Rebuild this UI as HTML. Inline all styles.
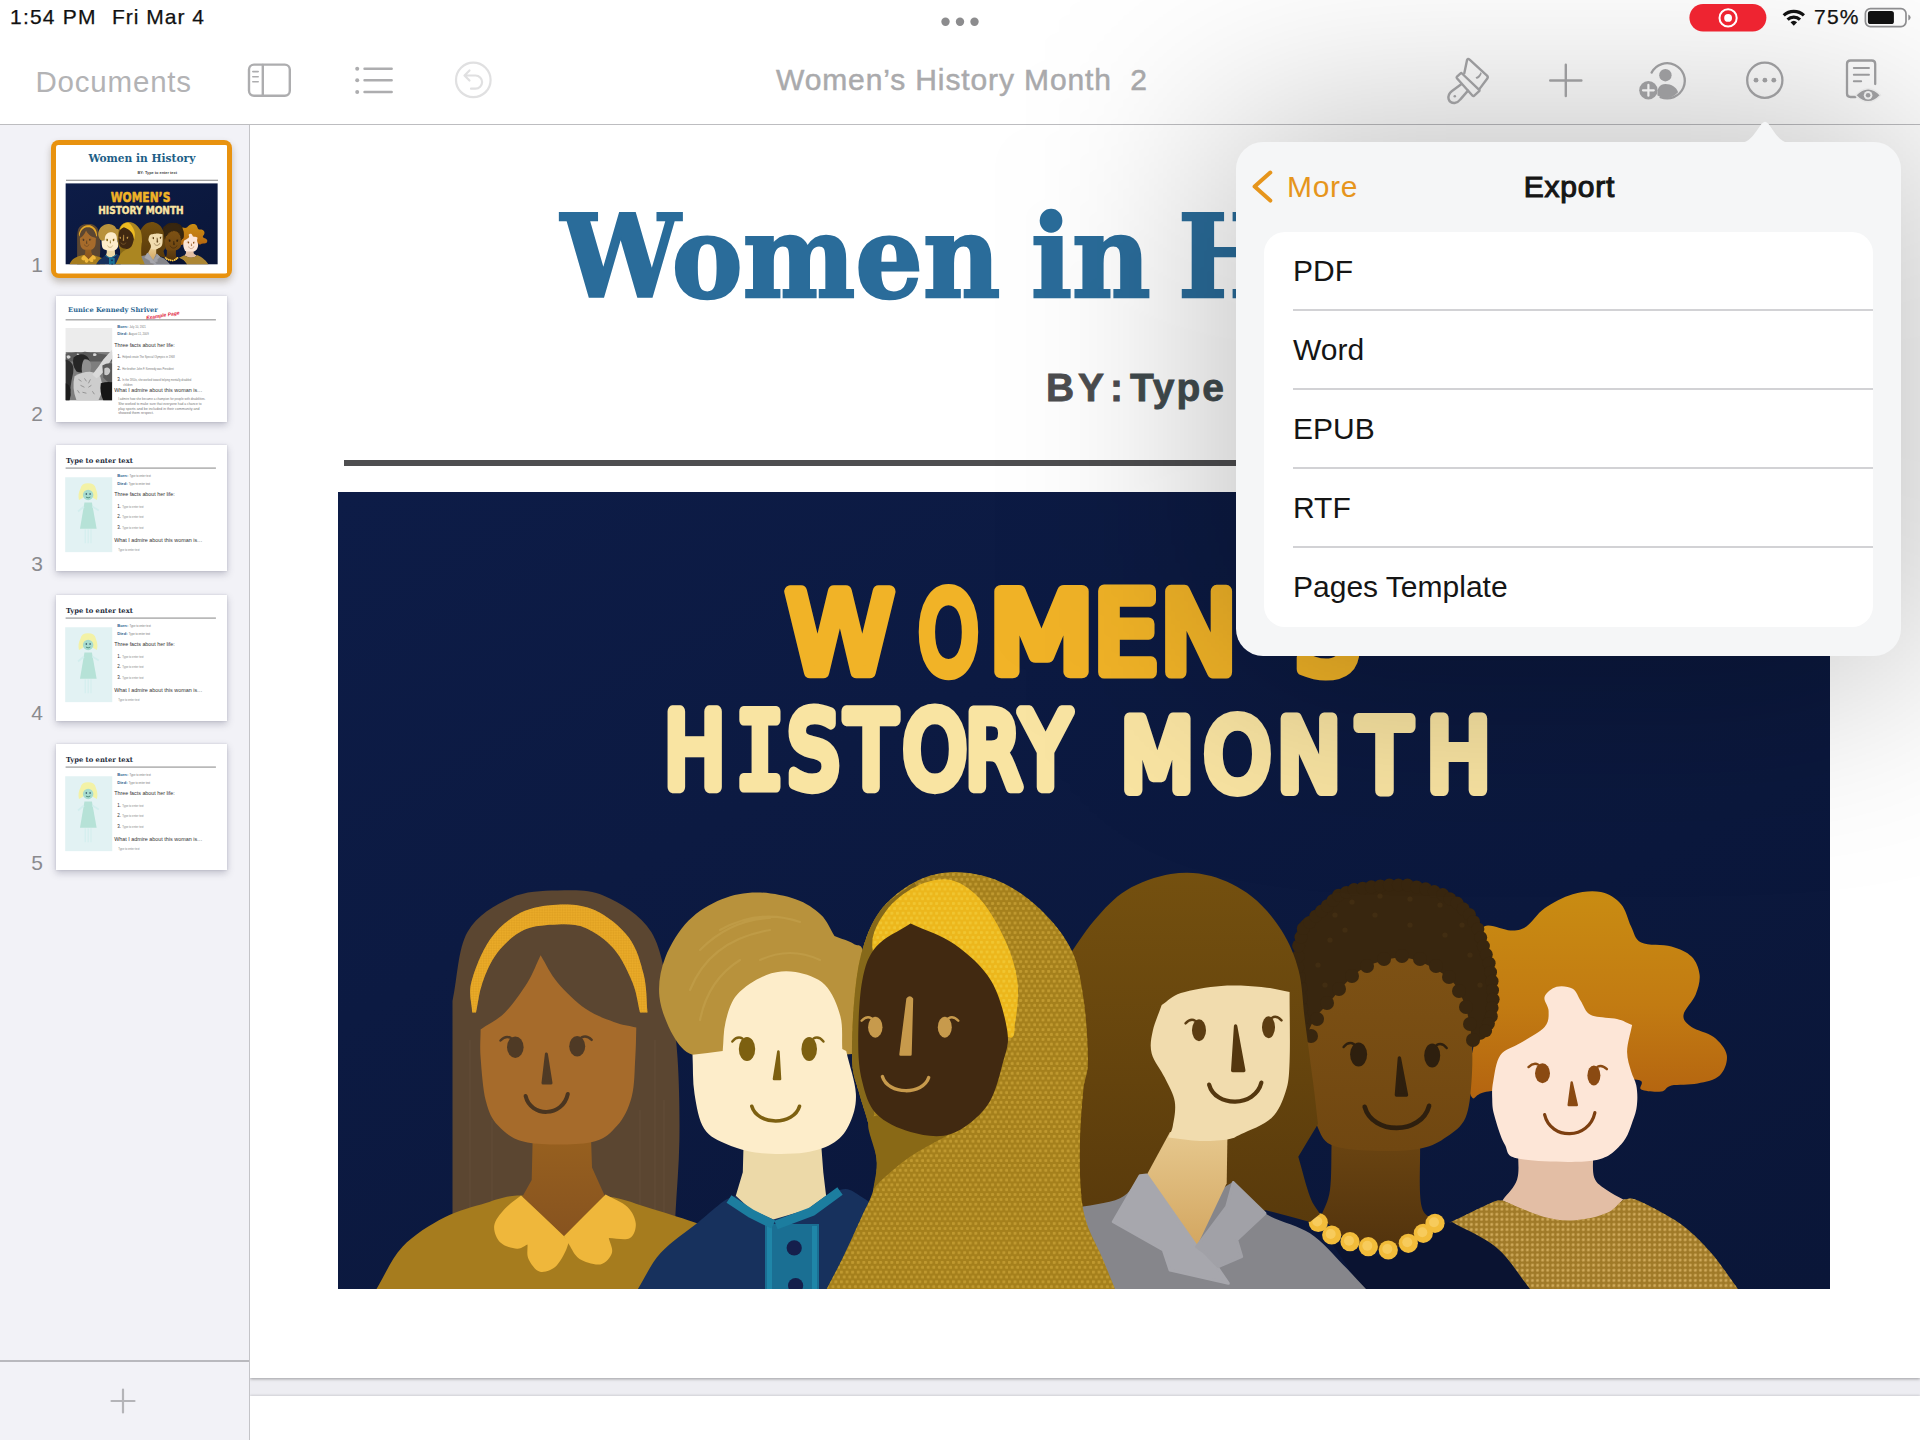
<!DOCTYPE html>
<html lang="en">
<head>
<meta charset="utf-8">
<title>Women's History Month 2</title>
<style>
*{box-sizing:border-box;margin:0;padding:0}
html,body{width:1920px;height:1440px;overflow:hidden;background:#fff;font-family:"Liberation Sans",sans-serif;}
#app{position:relative;width:1920px;height:1440px;overflow:hidden;background:#fff}
.abs{position:absolute}
/* status bar */
#status{-webkit-text-stroke:.25px #111;position:absolute;left:0;top:0;width:1920px;height:40px;color:#111;font-size:21px;letter-spacing:1px;z-index:30}
#status span{position:absolute;white-space:nowrap;line-height:24px}
/* toolbar */
#toolbar{position:absolute;left:0;top:0;width:1920px;height:125px;border-bottom:1.5px solid #bdbdc0;z-index:20;background:#fff}
#toolbar .t{position:absolute;white-space:nowrap;color:#b3b3b5;font-size:29.5px;line-height:34px;letter-spacing:.8px}
/* sidebar */
#sidebar{position:absolute;left:0;top:125px;width:250px;height:1315px;background:#f2f2f7;border-right:1.5px solid #c4c4c8;z-index:5}
.num{position:absolute;color:#8a8a8e;font-size:21px;line-height:22px;width:20px;text-align:center;left:27px}
.thumb{position:absolute;left:56px;width:171px;height:126px;background:#fff;box-shadow:0 3px 7px rgba(60,60,90,.28),0 0 2px rgba(60,60,90,.18);overflow:hidden}
/* page */
#page{position:absolute;left:250px;top:125px;width:1670px;height:1253px;background:#fff;box-shadow:0 1px 3px rgba(0,0,0,.35);z-index:2}
#gap{position:absolute;left:250px;top:1378px;width:1670px;height:18px;background:#ededf2;z-index:1}
#page2{position:absolute;left:250px;top:1396px;width:1670px;height:60px;background:#fff;box-shadow:0 -1px 2px rgba(0,0,0,.12);z-index:2}
.tw{position:absolute;top:186.5px;font-family:"DejaVu Serif","Liberation Serif",serif;font-weight:bold;font-size:115px;line-height:140px;color:#2a6c9a;white-space:nowrap;transform-origin:0 0;z-index:3;-webkit-text-stroke:2.6px #2a6c9a;paint-order:stroke fill}
.by{z-index:3;top:363px;font-weight:bold;font-size:39px;line-height:50px;color:#4c4d4f;white-space:nowrap;-webkit-text-stroke:.8px #4c4d4f}
/* popover */
#shade{position:absolute;z-index:25;left:1221px;top:127px;width:695px;height:544px;border-radius:40px;background:rgba(0,0,0,.265);filter:blur(105px)}
#pop{position:absolute;z-index:40;left:1236px;top:142px;width:665px;height:514px;border-radius:27px;background:#f5f6f7}
#pop .list{position:absolute;left:28px;top:90px;width:609px;height:395px;background:#fff;border-radius:21px}
#pop .row{position:absolute;left:29px;width:580px;height:79px;font-size:30px;line-height:78px;color:#151515;white-space:nowrap}
#pop .sep{position:absolute;left:29px;width:580px;height:2px;background:#d2d2d5}
</style>
</head>
<body>
<div id="app">

<!-- ===== toolbar ===== -->
<div id="toolbar">
  <div class="t" style="left:35.5px;top:64.5px">Documents</div>
  <div class="t" id="doctitle" style="left:776px;top:63px;font-size:30px;color:#aaaaac;-webkit-text-stroke:.5px #aaaaac;letter-spacing:.88px;word-spacing:0px">Women’s History Month&nbsp; 2</div>
</div>

<!-- ===== status ===== -->
<div id="status">
  <span style="left:10px;top:5px;letter-spacing:1.2px">1:54 PM</span>
  <span style="left:112px;top:5px">Fri Mar 4</span>
  <span style="left:1814px;top:5px;letter-spacing:1.2px">75%</span>
</div>


<!-- ===== toolbar + status icons ===== -->
<svg class="abs" style="left:0;top:0;z-index:31" width="1920" height="125" viewBox="0 0 1920 125" fill="none" stroke-linecap="round" stroke-linejoin="round">
  <!-- multitask dots -->
  <g fill="#8c8c8e"><circle cx="945.5" cy="21.8" r="4.2"/><circle cx="960" cy="21.8" r="4.2"/><circle cx="974.5" cy="21.8" r="4.2"/></g>
  <!-- sidebar toggle -->
  <g stroke="#adadaf" stroke-width="2.4">
    <rect x="249" y="64.6" width="40.8" height="31.2" rx="5"/>
    <path d="M262.8 65v30.5"/>
    <path d="M252.8 71.6h5.4M252.8 76.7h5.4M252.8 81.8h5.4" stroke-width="1.6"/>
  </g>
  <!-- list -->
  <g stroke="#adadaf" stroke-width="2.4"><path d="M364.5 68.7h27.2M364.5 80.3h27.2M364.5 92h27.2"/></g>
  <g fill="#adadaf"><circle cx="357.2" cy="68.7" r="2"/><circle cx="357.2" cy="80.3" r="2"/><circle cx="357.2" cy="92" r="2"/></g>
  <!-- undo -->
  <g stroke="#e0e0e1" stroke-width="2.2"><circle cx="473.3" cy="79.9" r="17.3"/><path d="M469.5 70.5l-5 5 5 5M465 75.5h10.5a6.6 6.6 0 0 1 0 13.2h-4.5"/></g>
  <!-- brush -->
  <g stroke="#9a9a9c" stroke-width="2.4">
    <path d="M1464.3 73.2L1467 60.2Q1467.7 58 1469.6 59.6L1487 75.6Q1488.4 77 1487.3 78.5L1479 89.6"/>
    <path d="M1457 76.6L1460.6 73.4Q1461.3 72.8 1462 73.5L1479.2 89.8Q1479.9 90.5 1479.2 91.2L1474 95.8Q1473.3 96.4 1472.6 95.7L1456.9 78.2Q1456.3 77.4 1457 76.6Z"/>
    <path d="M1461.2 84.3L1452 91Q1447.6 94.4 1448.6 99Q1450 103.2 1454.6 103Q1458 102.6 1460.4 99.4L1468 90.6"/>
  </g>
  <path d="M1475.5 77.3q3.8-1.2 5.2-5.2l1 1.4q-1.2 4-5 5.6z" fill="#9a9a9c"/>
  <circle cx="1454.8" cy="96.2" r="1.3" fill="#9a9a9c"/>
  <!-- plus -->
  <path d="M1550.2 80.5h31.2M1565.8 64.8v31.2" stroke="#9a9a9c" stroke-width="2.4"/>
  <!-- collaborate -->
  <g>
    <path d="M1651.6 72.6A17.6 17.6 0 1 1 1660.6 97.1" stroke="#9a9a9c" stroke-width="2.3"/>
    <circle cx="1665.4" cy="75.2" r="6.2" fill="#9a9a9c"/>
    <path d="M1657.5 95.6c-.8-7.5 2.2-11.6 8-11.6s11 3.2 12.6 8.2q-6.500 6.800-14.6 5.800z" fill="#9a9a9c"/>
    <circle cx="1648.4" cy="90.3" r="9.2" fill="#9a9a9c"/>
    <path d="M1643 90.3h10.800M1648.4 84.9v10.800" stroke="#ececec" stroke-width="2.2"/>
  </g>
  <!-- more -->
  <circle cx="1764.8" cy="80.2" r="17.6" stroke="#9a9a9c" stroke-width="2.3"/>
  <g fill="#9a9a9c"><circle cx="1756" cy="80.2" r="2.4"/><circle cx="1764.9" cy="80.2" r="2.4"/><circle cx="1773.800" cy="80.2" r="2.4"/></g>
  <!-- document view -->
  <g stroke="#9a9a9c" stroke-width="2.3">
    <path d="M1855.500 97H1850.500Q1847 97 1847 93.500V64Q1847 60.500 1850.500 60.500H1871.700Q1875.200 60.500 1875.200 64V84"/>
    <path d="M1853.800 68h15.200M1853.800 74.700h15.200M1853.800 81.300h7.400" stroke-width="1.900"/>
  </g>
  <path d="M1855.600 95.300q12.500-13.200 25 0q-12.500 13.200-25 0z" fill="#9a9a9c" stroke="#e6e6e6" stroke-width="1.600"/>
  <circle cx="1868.100" cy="95.300" r="4.300" fill="#e8e8e8"/><circle cx="1868.100" cy="95.300" r="2.300" fill="#9a9a9c"/>
  <!-- recording pill -->
  <rect x="1689.400" y="4" width="77" height="27.400" rx="13.700" fill="#ee2431"/>
  <circle cx="1728.100" cy="17.900" r="8.600" stroke="#fff" stroke-width="2"/>
  <circle cx="1728.100" cy="17.900" r="3.900" fill="#fff"/>
  <!-- wifi -->
  <g stroke="#111" stroke-width="3.200" stroke-linecap="butt">
    <path d="M1783.700 15.300a14.800 14.800 0 0 1 20.200 0"/>
    <path d="M1787.600 19.600a9 9 0 0 1 12.400 0"/>
  </g>
  <path d="M1790.500 22.300a4.800 4.800 0 0 1 6.600 0l-3.300 3.500z" fill="#111"/>
  <!-- battery -->
  <rect x="1865.400" y="8.600" width="40.600" height="18" rx="5" stroke="#8d8d8f" stroke-width="1.700"/>
  <rect x="1867.900" y="11.100" width="26" height="13" rx="2.600" fill="#111"/>
  <path d="M1908.300 14.600q2.300 1 2.300 3t-2.300 3z" fill="#8d8d8f"/>
</svg>

<!-- ===== sidebar ===== -->
<div id="sidebar">
  <div class="abs" style="left:50.700px;top:15.400px;width:181.600px;height:138px;border-radius:8px;background:#e8920f;box-shadow:0 4px 7px rgba(80,60,30,.3)"></div>
  <svg class="abs" style="left:55.600px;top:20.200px" width="171.800" height="128.400" viewBox="0 0 171.800 128.400">
    <rect width="171.800" height="128.400" rx="2.500" fill="#fff"/>
    <text x="85.900" y="17.500" text-anchor="middle" font-family="'DejaVu Serif','Liberation Serif',serif" font-weight="bold" font-size="11" fill="#1e5f87" textLength="107" lengthAdjust="spacingAndGlyphs">Women in History</text>
    <text x="81.500" y="29.200" font-family="'Liberation Sans',sans-serif" font-weight="bold" font-size="3.900" fill="#444">BY: Type to enter text</text>
    <rect x="10" y="34.800" width="152" height=".8" fill="#666"/>
    <svg x="9.400" y="38.200" width="152.400" height="81.400" viewBox="338 492 1492 797" preserveAspectRatio="none"><use href="#art"/></svg>
    <g font-family="'DejaVu Sans','Liberation Sans',sans-serif" font-weight="bold" stroke-linejoin="round">
      <text x="54.800" y="57.300" font-size="13.500" fill="#f1b327" stroke="#f1b327" stroke-width=".6" textLength="59.600" lengthAdjust="spacingAndGlyphs">WOMEN’S</text>
      <text x="42.200" y="69" font-size="11.300" fill="#f9e4a2" stroke="#f9e4a2" stroke-width=".5" textLength="85.500" lengthAdjust="spacingAndGlyphs">HISTORY MONTH</text>
    </g>
  </svg>
  <svg class="thumb" style="top:170.500px" width="171" height="127" viewBox="0 0 171 127">
    <rect width="171" height="127" fill="#fff"/>
    <text x="11.500" y="16" font-family="'DejaVu Serif','Liberation Serif',serif" font-weight="bold" font-size="6.600" fill="#2c6792" textLength="90.500" lengthAdjust="spacingAndGlyphs">Eunice Kennedy Shriver</text>
    <text transform="translate(90.500 23.800) rotate(-9)" font-family="'Liberation Sans',sans-serif" font-style="italic" font-weight="bold" font-size="5" fill="#e0213a">Example Page</text>
    <rect x="9" y="23.600" width="151.500" height=".9" fill="#777"/>
    <rect x="8.900" y="32.300" width="47.100" height="73" fill="#ececec"/>
    <clipPath id="cph"><rect x="8.900" y="32.300" width="47.100" height="73"/></clipPath>
    <g clip-path="url(#cph)">
      <rect x="8.900" y="56.500" width="47.100" height="48.800" fill="#7e7e7e"/>
      <path d="M8.900 58.500C12 56.500 15 58 18 57C21 56 24 58 27 56.500C30 55.500 33 57.500 36 57C39 56.500 42 58 45 58.500L56 60V66H8.900Z" fill="#5a5a5a"/>
      <path d="M10 60.500q2-1.500 3.500 0t-1 2.500-2.500-2.500zM37 58q2-1 3 .5t-1.500 2-1.500-2.500zM20 58.500q1.500-1 2.500 0t-1 1.800z" fill="#d6d6d6"/>
      <path d="M8.900 64q5 1 7 5t0 12-3 24h-4z" fill="#2d2d2d"/>
      <path d="M17 62q5-4.500 10-3t6 6q-2 5-1 9-6 5-12 2-5-6-3-14z" fill="#262626"/>
      <path d="M27.500 64q4-1 6 2t1 8-4 6-5-3q-1-8 2-13z" fill="#8f8f8f"/>
      <path d="M18 81q8-5 17-4.500 6 1 9 5l2.500 10q-1 8-4.500 13.800h-22q-5-12-2-24.300z" fill="#cdcdcd"/>
      <path d="M22 84l3 2M28 83l2 3M34 84l-2 4M24 90l4 2M32 92l3-2M26 97l4 1M36 96l2 3M21 95l2 3" stroke="#8d8d8d" stroke-width=".9" fill="none"/>
      <path d="M36 79q6-7 11-15l9-10v9l-8 12q-4 6-8 8z" fill="#d9d9d9"/>
      <path d="M46 70q5-3 10-2v20q-6-1-9-6z" fill="#5b5b5b"/>
      <path d="M48 73q3-2 5 0t0 5-5 1z" fill="#c9c9c9"/>
      <path d="M44.500 88q6-2 11.500-1v18.300h-9q-4-8-2.500-17.300z" fill="#161616"/>
      <path d="M8.900 88q4 1 5 6t-1 11.300h-4z" fill="#1c1c1c"/>
    </g>
    <g font-family="'Liberation Sans',sans-serif" fill="#333">
      <text x="61" y="32" font-size="4.200" font-weight="bold" fill="#2f5f8f">Born: <tspan font-weight="normal" font-size="2.800" fill="#777">July 10, 1921</tspan></text>
      <text x="61" y="39.700" font-size="4.200" font-weight="bold" fill="#2f5f8f">Died: <tspan font-weight="normal" font-size="2.800" fill="#777">August 11, 2009</tspan></text>
      <text x="58" y="51" font-size="5.100" textLength="61" lengthAdjust="spacingAndGlyphs">Three facts about her life:</text>
      <text x="61" y="62.300" font-size="4.600">1. <tspan font-size="2.700" fill="#777">Helped create The Special Olympics in 1968</tspan></text>
      <text x="61" y="74.300" font-size="4.600">2. <tspan font-size="2.700" fill="#777">Her brother John F. Kennedy was President</tspan></text>
      <text x="61" y="86" font-size="4.600">3. <tspan font-size="2.700" fill="#777">In the 1950s, she worked toward helping mentally disabled</tspan></text>
      <text x="67" y="90.500" font-size="2.700" fill="#777">children</text>
      <text x="58" y="96.500" font-size="5.100" textLength="89" lengthAdjust="spacingAndGlyphs">What I admire about this woman is…</text>
      <g font-size="2.700" fill="#777">
        <text x="62" y="105" textLength="88" lengthAdjust="spacingAndGlyphs">I admire how she became a champion for people with disabilities.</text>
        <text x="62" y="109.800" textLength="84" lengthAdjust="spacingAndGlyphs">She worked to make sure that everyone had a chance to</text>
        <text x="62" y="114.600" textLength="82" lengthAdjust="spacingAndGlyphs">play sports and be included in their community and</text>
        <text x="62" y="119.400" textLength="36" lengthAdjust="spacingAndGlyphs">showed them respect.</text>
      </g>
    </g>
  </svg>
  <svg class="thumb" style="top:320px" width="171" height="127" viewBox="0 0 171 127">
    <rect width="171" height="127" fill="#fff"/>
    <text x="9.300" y="18.300" font-family="'DejaVu Serif','Liberation Serif',serif" font-weight="bold" font-size="6.900" fill="#1d2a3a" textLength="67.500" lengthAdjust="spacingAndGlyphs">Type to enter text</text>
    <rect x="9" y="22.800" width="151.500" height=".9" fill="#777"/>
    <rect x="8.600" y="32.500" width="47.400" height="75.500" fill="#e2f2f3"/>
    <path d="M24 44q1-5.500 7.500-5.500q7 0 8 5.500q2.500 6 1 11.500q-4-1-5.500-4.500h-7q-1.500 3.500-5.500 4.500q-1.500-6.500 1.500-11.500z" fill="#f3f2a6"/>
    <circle cx="31.700" cy="50.300" r="5.300" fill="#a7dccf"/>
    <circle cx="29.900" cy="49.400" r=".8" fill="#1f3b55"/><circle cx="33.700" cy="49.400" r=".8" fill="#1f3b55"/>
    <path d="M29.500 52.500q2.200 1.600 4.400 0" stroke="#2d6a58" stroke-width=".7" fill="none"/>
    <path d="M28 58h7.500l4.800 26.500h-16.800z" fill="#b6e2d7"/>
    <path d="M27.500 62l-6 5M36 62l6.500 4" stroke="#d3eeee" stroke-width="1.800" fill="none"/>
    <path d="M28.800 85v14M31.700 85v14M34.600 85v14" stroke="#d5efef" stroke-width="1.300"/>
    <g font-family="'Liberation Sans',sans-serif" fill="#333">
      <text x="61" y="32.500" font-size="4.200" font-weight="bold" fill="#2f5f8f">Born: <tspan font-weight="normal" font-size="2.800" fill="#777">Type to enter text</tspan></text>
      <text x="61" y="40.200" font-size="4.200" font-weight="bold" fill="#2f5f8f">Died: <tspan font-weight="normal" font-size="2.800" fill="#777">Type to enter text</tspan></text>
      <text x="58" y="51" font-size="5.100" textLength="61" lengthAdjust="spacingAndGlyphs">Three facts about her life:</text>
      <text x="61" y="63.300" font-size="4.600">1. <tspan font-size="2.800" fill="#888">Type to enter text</tspan></text>
      <text x="61" y="74" font-size="4.600">2. <tspan font-size="2.800" fill="#888">Type to enter text</tspan></text>
      <text x="61" y="84.900" font-size="4.600">3. <tspan font-size="2.800" fill="#888">Type to enter text</tspan></text>
      <text x="58" y="97.300" font-size="5.100" textLength="89" lengthAdjust="spacingAndGlyphs">What I admire about this woman is…</text>
      <text x="62" y="106.500" font-size="2.800" fill="#888">Type to enter text</text>
    </g>
  </svg>
  <svg class="thumb" style="top:469.5px" width="171" height="127" viewBox="0 0 171 127">
    <rect width="171" height="127" fill="#fff"/>
    <text x="9.300" y="18.300" font-family="'DejaVu Serif','Liberation Serif',serif" font-weight="bold" font-size="6.900" fill="#1d2a3a" textLength="67.500" lengthAdjust="spacingAndGlyphs">Type to enter text</text>
    <rect x="9" y="22.800" width="151.500" height=".9" fill="#777"/>
    <rect x="8.600" y="32.500" width="47.400" height="75.500" fill="#e2f2f3"/>
    <path d="M24 44q1-5.500 7.500-5.500q7 0 8 5.500q2.500 6 1 11.500q-4-1-5.500-4.500h-7q-1.500 3.500-5.500 4.500q-1.500-6.500 1.500-11.500z" fill="#f3f2a6"/>
    <circle cx="31.700" cy="50.300" r="5.300" fill="#a7dccf"/>
    <circle cx="29.900" cy="49.400" r=".8" fill="#1f3b55"/><circle cx="33.700" cy="49.400" r=".8" fill="#1f3b55"/>
    <path d="M29.500 52.500q2.200 1.600 4.400 0" stroke="#2d6a58" stroke-width=".7" fill="none"/>
    <path d="M28 58h7.500l4.800 26.500h-16.800z" fill="#b6e2d7"/>
    <path d="M27.500 62l-6 5M36 62l6.500 4" stroke="#d3eeee" stroke-width="1.800" fill="none"/>
    <path d="M28.800 85v14M31.700 85v14M34.600 85v14" stroke="#d5efef" stroke-width="1.300"/>
    <g font-family="'Liberation Sans',sans-serif" fill="#333">
      <text x="61" y="32.500" font-size="4.200" font-weight="bold" fill="#2f5f8f">Born: <tspan font-weight="normal" font-size="2.800" fill="#777">Type to enter text</tspan></text>
      <text x="61" y="40.200" font-size="4.200" font-weight="bold" fill="#2f5f8f">Died: <tspan font-weight="normal" font-size="2.800" fill="#777">Type to enter text</tspan></text>
      <text x="58" y="51" font-size="5.100" textLength="61" lengthAdjust="spacingAndGlyphs">Three facts about her life:</text>
      <text x="61" y="63.300" font-size="4.600">1. <tspan font-size="2.800" fill="#888">Type to enter text</tspan></text>
      <text x="61" y="74" font-size="4.600">2. <tspan font-size="2.800" fill="#888">Type to enter text</tspan></text>
      <text x="61" y="84.900" font-size="4.600">3. <tspan font-size="2.800" fill="#888">Type to enter text</tspan></text>
      <text x="58" y="97.300" font-size="5.100" textLength="89" lengthAdjust="spacingAndGlyphs">What I admire about this woman is…</text>
      <text x="62" y="106.500" font-size="2.800" fill="#888">Type to enter text</text>
    </g>
  </svg>
  <svg class="thumb" style="top:619px" width="171" height="127" viewBox="0 0 171 127">
    <rect width="171" height="127" fill="#fff"/>
    <text x="9.300" y="18.300" font-family="'DejaVu Serif','Liberation Serif',serif" font-weight="bold" font-size="6.900" fill="#1d2a3a" textLength="67.500" lengthAdjust="spacingAndGlyphs">Type to enter text</text>
    <rect x="9" y="22.800" width="151.500" height=".9" fill="#777"/>
    <rect x="8.600" y="32.500" width="47.400" height="75.500" fill="#e2f2f3"/>
    <path d="M24 44q1-5.500 7.500-5.500q7 0 8 5.500q2.500 6 1 11.500q-4-1-5.500-4.500h-7q-1.500 3.500-5.500 4.500q-1.500-6.500 1.500-11.500z" fill="#f3f2a6"/>
    <circle cx="31.700" cy="50.300" r="5.300" fill="#a7dccf"/>
    <circle cx="29.900" cy="49.400" r=".8" fill="#1f3b55"/><circle cx="33.700" cy="49.400" r=".8" fill="#1f3b55"/>
    <path d="M29.500 52.500q2.200 1.600 4.400 0" stroke="#2d6a58" stroke-width=".7" fill="none"/>
    <path d="M28 58h7.500l4.800 26.500h-16.800z" fill="#b6e2d7"/>
    <path d="M27.500 62l-6 5M36 62l6.500 4" stroke="#d3eeee" stroke-width="1.800" fill="none"/>
    <path d="M28.800 85v14M31.700 85v14M34.600 85v14" stroke="#d5efef" stroke-width="1.300"/>
    <g font-family="'Liberation Sans',sans-serif" fill="#333">
      <text x="61" y="32.500" font-size="4.200" font-weight="bold" fill="#2f5f8f">Born: <tspan font-weight="normal" font-size="2.800" fill="#777">Type to enter text</tspan></text>
      <text x="61" y="40.200" font-size="4.200" font-weight="bold" fill="#2f5f8f">Died: <tspan font-weight="normal" font-size="2.800" fill="#777">Type to enter text</tspan></text>
      <text x="58" y="51" font-size="5.100" textLength="61" lengthAdjust="spacingAndGlyphs">Three facts about her life:</text>
      <text x="61" y="63.300" font-size="4.600">1. <tspan font-size="2.800" fill="#888">Type to enter text</tspan></text>
      <text x="61" y="74" font-size="4.600">2. <tspan font-size="2.800" fill="#888">Type to enter text</tspan></text>
      <text x="61" y="84.900" font-size="4.600">3. <tspan font-size="2.800" fill="#888">Type to enter text</tspan></text>
      <text x="58" y="97.300" font-size="5.100" textLength="89" lengthAdjust="spacingAndGlyphs">What I admire about this woman is…</text>
      <text x="62" y="106.500" font-size="2.800" fill="#888">Type to enter text</text>
    </g>
  </svg>
  <div class="num" style="top:128.5px">1</div>
  <div class="num" style="top:278px">2</div>
  <div class="num" style="top:427.5px">3</div>
  <div class="num" style="top:577px">4</div>
  <div class="num" style="top:726.5px">5</div>
  <svg class="abs" style="left:108px;top:1261px" width="30" height="30" viewBox="0 0 30 30"><path d="M3.500 15h23M15 3.500v23" stroke="#b4b4b8" stroke-width="2.200" stroke-linecap="round"/></svg>
  <div class="abs" style="left:0;top:1235px;width:249px;height:1.5px;background:#b9b9be"></div>
</div>

<!-- ===== document page ===== -->
<div id="page"></div>
<div id="gap"></div>
<div id="page2"></div>

<div class="tw" id="tw1" style="left:561px;transform:scaleX(.925)">Women</div>
<div class="tw" id="tw2" style="left:1031px;transform:scaleX(.94)">in</div>
<div class="tw" id="tw3" style="left:1178px;transform:scaleX(.925)">History</div>

<div class="abs by" style="left:1046px">B</div><div class="abs by" style="left:1078px">Y</div><div class="abs by" style="left:1110px">:</div><div class="abs by" style="left:1130px;color:#414b4e;-webkit-text-stroke:.8px #414b4e;letter-spacing:1.9px">Type to enter text</div>
<div class="abs" style="z-index:3;left:344px;top:460px;width:1486px;height:6px;background:#4e4e50"></div>

<!-- ART-BEGIN -->
<svg class="abs" id="artsvg" style="left:338px;top:492px;z-index:3" width="1492" height="797" viewBox="338 492 1492 797">
<defs>
<pattern id="pdot" width="5.6" height="9.7" patternUnits="userSpaceOnUse"><circle cx="1.4" cy="1.4" r="1.6" fill="#c9a236"/><circle cx="4.2" cy="6.25" r="1.6" fill="#c9a236"/></pattern>
<pattern id="pdot2" width="5.6" height="9.7" patternUnits="userSpaceOnUse"><circle cx="1.4" cy="1.4" r="1.6" fill="#f3cf3f"/><circle cx="4.2" cy="6.25" r="1.6" fill="#f3cf3f"/></pattern>
<pattern id="pdot3" width="7.2" height="7.2" patternUnits="userSpaceOnUse" patternTransform="rotate(45)"><circle cx="1.8" cy="1.8" r="1.5" fill="#cfa95a"/><circle cx="5.4" cy="5.4" r="1.5" fill="#cfa95a"/></pattern>
<pattern id="pband" width="3.6" height="3.6" patternUnits="userSpaceOnUse" patternTransform="rotate(45)"><rect width="1.8" height="1.8" fill="#d89a1e"/><rect x="1.8" y="1.8" width="1.8" height="1.8" fill="#d89a1e"/></pattern>
<linearGradient id="gh4" x1="0" y1="0" x2="0" y2="1"><stop offset="0" stop-color="#74500f"/><stop offset="1" stop-color="#54360b"/></linearGradient>
<linearGradient id="gh6" x1="0" y1="0" x2="0" y2="1"><stop offset="0" stop-color="#c98c12"/><stop offset=".55" stop-color="#c27b12"/><stop offset="1" stop-color="#b46410"/></linearGradient>
<linearGradient id="gn1" x1="0" y1="0" x2="0" y2="1"><stop offset="0" stop-color="#97601f"/><stop offset="1" stop-color="#87531f"/></linearGradient>
<linearGradient id="gn4" x1="0" y1="0" x2="0" y2="1"><stop offset="0" stop-color="#e6c88e"/><stop offset="1" stop-color="#d3a660"/></linearGradient>
<linearGradient id="gn5" x1="0" y1="0" x2="0" y2="1"><stop offset="0" stop-color="#6a4411"/><stop offset="1" stop-color="#52330d"/></linearGradient>
<linearGradient id="gf5" x1="0" y1="0" x2="0" y2="1"><stop offset="0" stop-color="#7d5114"/><stop offset="1" stop-color="#704711"/></linearGradient>
<linearGradient id="gbg" x1="0" y1="0" x2="1" y2="1"><stop offset="0" stop-color="#0d1c47"/><stop offset="1" stop-color="#0a1638"/></linearGradient>
<clipPath id="cart"><rect x="338" y="492" width="1492" height="797"/></clipPath>
</defs>
<g id="art" clip-path="url(#cart)">
<rect x="338" y="492" width="1492" height="797" fill="url(#gbg)"/>
<path d="M1484.2 926.4C1490.2 923.1 1503.3 930.4 1510.3 930.4C1517.3 930.4 1520.7 930.1 1526.4 926.4C1532.1 922.7 1536.9 913.7 1544.6 908.3C1552.3 902.9 1563.3 896.9 1572.7 894.2C1582.1 891.5 1592.8 890.4 1600.9 892.1C1609 893.8 1616.1 898.5 1621.1 904.2C1626.1 909.9 1627.8 920 1631.1 926.4C1634.4 932.8 1634.5 939.1 1641.2 942.5C1647.9 945.9 1663 944.1 1671.4 946.5C1679.8 948.9 1686.8 951.9 1691.5 956.6C1696.2 961.3 1698.9 968.3 1699.6 974.7C1700.3 981.1 1698.3 988.1 1695.6 994.8C1692.9 1001.5 1684.2 1009.6 1683.5 1015C1682.8 1020.4 1686.5 1023.3 1691.5 1027C1696.5 1030.7 1707.8 1032.4 1713.7 1037.1C1719.6 1041.8 1725.8 1048.8 1726.8 1055.2C1727.8 1061.6 1724.6 1070.7 1719.7 1075.4C1714.8 1080.1 1705.6 1081.7 1697.6 1083.4C1689.5 1085.1 1677.5 1084.1 1671.4 1085.4C1665.4 1086.8 1666.3 1090.8 1661.3 1091.5C1656.3 1092.2 1645.5 1091.5 1641.2 1089.5C1636.9 1087.5 1648.7 1080.2 1635.2 1079.4C1621.7 1078.7 1584.5 1083 1560 1085C1535.5 1087 1502.9 1089.4 1488.2 1091.5C1473.5 1093.6 1475.4 1100.9 1472.1 1097.5C1468.8 1094.1 1467.8 1080.7 1468.1 1071.3C1468.4 1061.9 1473.7 1052.9 1474 1041C1474.3 1029.1 1470 1015.2 1470 1000C1470 984.8 1471.6 962.3 1474 950C1476.4 937.7 1478.2 929.7 1484.2 926.4Z" fill="url(#gh6)"/>
<path d="M1518.1 1150C1517.8 1159.9 1519.7 1171.2 1517.1 1179.6C1514.5 1188 1507.4 1193.5 1502.5 1200.4C1516.4 1206.6 1532 1215.4 1544.2 1219C1556.4 1222.6 1565 1222.7 1575.4 1222C1585.8 1221.3 1598.7 1218.8 1606.7 1215C1614.7 1211.2 1617.8 1204.6 1623.3 1199.4C1617.8 1196.3 1611.5 1193.7 1606.7 1190C1601.9 1186.3 1596.5 1184.2 1594.2 1177.5C1591.9 1170.8 1593.5 1159.2 1593.1 1150C1568.1 1150 1543.1 1150 1518.1 1150Z" fill="#e3bea5"/>
<path d="M1448.3 1223.3C1462.9 1216.4 1483 1206.3 1492 1202.5C1501 1198.7 1499 1201.1 1502.5 1200.4C1516.4 1205.9 1532 1213.7 1544.2 1217C1556.4 1220.3 1565 1220.9 1575.4 1220.2C1585.8 1219.5 1598.7 1216.5 1606.7 1213C1614.7 1209.5 1617.8 1203.9 1623.3 1199.4C1628.2 1199.7 1628.5 1196.4 1637.9 1200.4C1647.3 1204.4 1667.4 1214.6 1679.6 1223.3C1691.8 1232 1701.1 1241.5 1710.8 1252.5C1720.5 1263.5 1728.9 1276.8 1737.9 1289C1667.4 1289 1597 1289 1526.5 1289C1520.6 1280.3 1516.3 1271.1 1508.8 1262.9C1501.3 1254.7 1491.8 1246.6 1481.7 1240C1471.6 1233.4 1459.4 1228.9 1448.3 1223.3Z" fill="#a07a28"/><path d="M1448.3 1223.3C1462.9 1216.4 1483 1206.3 1492 1202.5C1501 1198.7 1499 1201.1 1502.5 1200.4C1516.4 1205.9 1532 1213.7 1544.2 1217C1556.4 1220.3 1565 1220.9 1575.4 1220.2C1585.8 1219.5 1598.7 1216.5 1606.7 1213C1614.7 1209.5 1617.8 1203.9 1623.3 1199.4C1628.2 1199.7 1628.5 1196.4 1637.9 1200.4C1647.3 1204.4 1667.4 1214.6 1679.6 1223.3C1691.8 1232 1701.1 1241.5 1710.8 1252.5C1720.5 1263.5 1728.9 1276.8 1737.9 1289C1667.4 1289 1597 1289 1526.5 1289C1520.6 1280.3 1516.3 1271.1 1508.8 1262.9C1501.3 1254.7 1491.8 1246.6 1481.7 1240C1471.6 1233.4 1459.4 1228.9 1448.3 1223.3Z" fill="url(#pdot3)"/>
<path d="M1493.2 1081.4C1494.5 1074.3 1495.8 1061.6 1500.3 1055.2C1504.8 1048.8 1513 1047.8 1520.4 1043.1C1527.8 1038.4 1539.9 1032.4 1544.6 1027C1549.3 1021.6 1548.6 1015.9 1548.6 1010.9C1548.6 1005.9 1543.3 1000.8 1544.6 996.8C1545.9 992.8 1551.9 988.1 1556.6 986.8C1561.3 985.5 1568.7 986.4 1572.7 988.8C1576.7 991.1 1577.8 996.5 1580.8 1000.9C1583.8 1005.3 1584.9 1012 1590.9 1015C1596.9 1018 1610.1 1017.3 1617 1019C1623.9 1020.7 1627.1 1023 1632.1 1025C1630.4 1033.7 1627.3 1043.5 1627.1 1051.2C1626.9 1058.9 1629.6 1065.7 1631.1 1071.3C1632.6 1076.9 1635.2 1080 1636.2 1085C1637.2 1090 1637.6 1096 1637.2 1101.5C1636.8 1107 1636.5 1110.9 1633.8 1118C1631.1 1125.1 1628.3 1137.1 1621.3 1144.2C1614.3 1151.3 1609 1158.4 1592 1160.8C1575 1163.2 1533.8 1161.6 1519.2 1158.8C1504.6 1156 1508.8 1151.5 1504.6 1144.2C1500.4 1136.9 1496.3 1122.7 1494.2 1115C1492.1 1107.3 1492.4 1103.6 1492.2 1098C1492 1092.4 1491.9 1088.5 1493.2 1081.4Z" fill="#fde6d7"/>
<ellipse cx="1542.5" cy="1073.3" rx="7.5" ry="10" fill="#8a4a12"/><path d="M1538.4 1064.7Q1533.5 1062.1 1528.5 1067.1" stroke="#8a4a12" stroke-width="2.4" fill="none" stroke-linecap="round"/>
<ellipse cx="1593.9" cy="1075.4" rx="6.5" ry="10" fill="#8a4a12"/><path d="M1597.5 1066.8Q1601.9 1064.2 1606.9 1069.2" stroke="#8a4a12" stroke-width="2.4" fill="none" stroke-linecap="round"/>
<path d="M1571.7 1082.4L1576.8 1105L1568.7 1105Z" fill="#8a4a12" stroke="#8a4a12" stroke-width="2.4" stroke-linejoin="round"/>
<path d="M1544.6 1114.6C1550.6 1140.4 1588.9 1140.4 1594.9 1112.6" stroke="#7c3f10" stroke-width="3.2" fill="none" stroke-linecap="round"/>
<path d="M1313 1222C1335.3 1233.3 1358.8 1255.3 1380 1256C1401.2 1256.7 1428 1231.7 1440 1226C1452 1220.3 1448 1223.3 1452 1222C1467 1230.7 1484 1236.8 1497 1248C1510 1259.2 1519 1275.3 1530 1289C1474 1289 1418 1289 1362 1289C1353 1275.3 1343.2 1259.2 1335 1248C1326.8 1236.8 1320.3 1230.7 1313 1222Z" fill="#0a1331"/>
<path d="M1304.3 1047.8C1288 1041.6 1303.4 1014.7 1302.1 1000.4C1300.9 986 1297.4 974.3 1296.9 961.6C1296.4 948.9 1295 932.9 1299.4 924.1C1303.8 915.4 1317.4 914.3 1323.2 909.2C1329 904.1 1327.8 897.4 1334.3 893.5C1340.7 889.6 1351 887.7 1362 886C1373.1 884.2 1387.8 882.1 1400.8 883C1413.7 883.9 1428.2 887 1439.5 891.6C1450.9 896.3 1461.6 902.4 1468.7 910.9C1475.9 919.3 1478.6 932.3 1482.4 942.4C1486.2 952.5 1489.8 961.7 1491.6 971.4C1493.5 981 1494.3 990.7 1493.6 1000.4C1493 1010.1 1491.2 1022.7 1488 1029.4C1484.8 1036.2 1489 1039.4 1474.3 1040.7C1459.6 1041.9 1428.1 1035.8 1399.8 1037C1371.5 1038.2 1320.6 1053.9 1304.3 1047.8Z" fill="#38260f"/>
<g fill="#38260f"><circle cx="1303.5" cy="1027.9" r="6.5"/><circle cx="1302.7" cy="1018.3" r="6.5"/><circle cx="1301.9" cy="1008.8" r="6.5"/><circle cx="1301.5" cy="998.3" r="6.5"/><circle cx="1301" cy="987.9" r="6.5"/><circle cx="1299.5" cy="977.4" r="6.5"/><circle cx="1297.9" cy="966.9" r="6.5"/><circle cx="1298.3" cy="956.4" r="6.5"/><circle cx="1298.6" cy="945.8" r="6.5"/><circle cx="1301" cy="937.2" r="6.5"/><circle cx="1303.3" cy="928.6" r="6.5"/><circle cx="1309.6" cy="922.4" r="6.5"/><circle cx="1315.8" cy="916.2" r="6.5"/><circle cx="1321.6" cy="911" r="6.5"/><circle cx="1327.3" cy="905.8" r="6.5"/><circle cx="1333" cy="900.5" r="6.5"/><circle cx="1338.7" cy="895.2" r="6.5"/><circle cx="1346.4" cy="892.4" r="6.5"/><circle cx="1354.1" cy="889.6" r="6.5"/><circle cx="1362.7" cy="888.2" r="6.5"/><circle cx="1371.3" cy="886.8" r="6.5"/><circle cx="1380.3" cy="885.9" r="6.5"/><circle cx="1389.4" cy="885" r="6.5"/><circle cx="1398.4" cy="885" r="6.5"/><circle cx="1407.5" cy="885" r="6.5"/><circle cx="1416.5" cy="886.9" r="6.5"/><circle cx="1425.6" cy="888.8" r="6.5"/><circle cx="1434.2" cy="891.6" r="6.5"/><circle cx="1442.7" cy="894.5" r="6.5"/><circle cx="1449.9" cy="898.8" r="6.5"/><circle cx="1457" cy="903" r="6.5"/><circle cx="1463.2" cy="908.8" r="6.5"/><circle cx="1469.4" cy="914.5" r="6.5"/><circle cx="1473.6" cy="921.7" r="6.5"/><circle cx="1477.9" cy="928.9" r="6.5"/><circle cx="1480.7" cy="937.5" r="6.5"/><circle cx="1483.4" cy="946.1" r="6.5"/><circle cx="1486.3" cy="954.6" r="6.5"/><circle cx="1489.1" cy="963.2" r="6.5"/><circle cx="1490.5" cy="972.2" r="6.5"/><circle cx="1492" cy="981.2" r="6.5"/><circle cx="1492.5" cy="990.2" r="6.5"/><circle cx="1493.1" cy="999.3" r="6.5"/><circle cx="1492.1" cy="1007.8" r="6.5"/><circle cx="1491.3" cy="1016.4" r="6.5"/><circle cx="1488.4" cy="1023.6" r="6.5"/><circle cx="1485.6" cy="1030.7" r="6.5"/></g>
<path d="M1331.7 1140C1331.1 1156.7 1331.8 1177.2 1330 1190C1328.2 1202.8 1324 1207.8 1321 1216.7C1329 1223.8 1335.2 1232.5 1345 1238C1354.8 1243.5 1368.3 1249.7 1380 1250C1391.7 1250.3 1405 1245 1415 1240C1425 1235 1431.7 1226.7 1440 1220C1433.9 1215.6 1425 1220 1421.7 1206.7C1418.4 1193.4 1420.6 1162.2 1420 1140C1390.6 1140 1361.1 1140 1331.7 1140Z" fill="url(#gn5)"/>
<path d="M1305.3 1047.3C1306 1035.5 1309.1 1028.9 1313.3 1021.2C1317.5 1013.5 1323.2 1009.1 1330.4 1001C1337.6 992.9 1347.9 979.5 1356.6 972.8C1365.3 966.1 1373.7 963.1 1382.8 960.7C1391.9 958.4 1400.2 956 1411 958.7C1421.8 961.4 1438.6 969.8 1447.3 976.8C1456 983.8 1459.4 990.9 1463.4 1001C1467.4 1011.1 1470.2 1023.9 1471.5 1037.3C1472.8 1050.7 1472.5 1068.2 1471.5 1081.6C1470.5 1095 1469.5 1108.7 1465.4 1117.9C1461.3 1127.1 1454 1131.6 1446.7 1136.7C1439.4 1141.8 1432.8 1145.9 1421.7 1148.3C1410.6 1150.7 1394.6 1151.4 1380 1151C1365.4 1150.6 1344.3 1149.8 1334 1146C1323.7 1142.2 1322.1 1137 1318 1127.9C1313.9 1118.9 1311.4 1105.1 1309.3 1091.7C1307.2 1078.3 1304.6 1059 1305.3 1047.3Z" fill="url(#gf5)"/>
<g fill="#38260f"><circle cx="1311" cy="1036" r="7"/><circle cx="1317" cy="1019" r="7"/><circle cx="1327" cy="1003" r="7"/><circle cx="1339" cy="989" r="7"/><circle cx="1352" cy="976" r="7"/><circle cx="1367" cy="966" r="7"/><circle cx="1384" cy="959" r="7"/><circle cx="1402" cy="956" r="7"/><circle cx="1420" cy="959" r="7"/><circle cx="1436" cy="966" r="7"/><circle cx="1449" cy="977" r="7"/><circle cx="1459" cy="991" r="7"/><circle cx="1466" cy="1007" r="7"/><circle cx="1470" cy="1024" r="7"/><circle cx="1473" cy="1040" r="7"/></g>
<g fill="#4a3415" opacity=".55"><circle cx="1335" cy="915" r="2.6"/><circle cx="1352" cy="902" r="2.6"/><circle cx="1380" cy="896" r="2.6"/><circle cx="1410" cy="899" r="2.6"/><circle cx="1440" cy="905" r="2.6"/><circle cx="1462" cy="925" r="2.6"/><circle cx="1330" cy="940" r="2.6"/><circle cx="1318" cy="965" r="2.6"/><circle cx="1345" cy="930" r="2.6"/><circle cx="1375" cy="915" r="2.6"/><circle cx="1410" cy="925" r="2.6"/><circle cx="1445" cy="935" r="2.6"/><circle cx="1470" cy="955" r="2.6"/><circle cx="1480" cy="985" r="2.6"/><circle cx="1325" cy="985" r="2.6"/></g>
<g fill="#f2bc3a"><circle cx="1318.3" cy="1222.5" r="9.6"/><circle cx="1331.7" cy="1235" r="9.6"/><circle cx="1350" cy="1241.7" r="9.6"/><circle cx="1368.3" cy="1246.7" r="9.6"/><circle cx="1388.3" cy="1250" r="9.6"/><circle cx="1408.3" cy="1243.3" r="9.6"/><circle cx="1423.3" cy="1233.3" r="9.6"/><circle cx="1435" cy="1223.3" r="9.6"/></g>
<g fill="#f7cb5c"><circle cx="1317.3" cy="1221.5" r="5"/><circle cx="1330.7" cy="1234" r="5"/><circle cx="1349" cy="1240.7" r="5"/><circle cx="1367.3" cy="1245.7" r="5"/><circle cx="1387.3" cy="1249" r="5"/><circle cx="1407.3" cy="1242.3" r="5"/><circle cx="1422.3" cy="1232.3" r="5"/><circle cx="1434" cy="1222.3" r="5"/></g>
<ellipse cx="1358.6" cy="1054.4" rx="8.5" ry="12" fill="#2e1f0e"/><path d="M1353.9 1044.1Q1348.6 1041 1343.6 1047" stroke="#2e1f0e" stroke-width="2.4" fill="none" stroke-linecap="round"/>
<ellipse cx="1432.2" cy="1055.4" rx="8" ry="12" fill="#2e1f0e"/><path d="M1436.6 1045.1Q1441.7 1042 1446.7 1048" stroke="#2e1f0e" stroke-width="2.4" fill="none" stroke-linecap="round"/>
<path d="M1399.4 1058L1406.5 1095L1396.4 1095Z" fill="#2e1f0e" stroke="#2e1f0e" stroke-width="3.4" stroke-linejoin="round"/>
<path d="M1364.7 1106.8C1372.4 1135.1 1421.4 1135.1 1429.1 1105.8" stroke="#2e1f0e" stroke-width="4.6" fill="none" stroke-linecap="round"/>
<path d="M1066 1289C1066 1179.3 1066 1069.7 1066 960C1075.4 946.8 1084.1 932 1094.2 920.4C1104.3 908.8 1113.7 897.9 1126.5 890.2C1139.3 882.5 1156.7 876.5 1170.8 874.1C1184.9 871.8 1197.7 872.4 1211.1 876.1C1224.5 879.8 1239.7 887.2 1251.4 896.3C1263.2 905.4 1273.7 918.1 1281.6 930.5C1289.5 942.9 1294.8 955.7 1298.7 970.8C1302.6 985.9 1302.6 1002.7 1305 1021.2C1307.4 1039.7 1310.8 1064.5 1313 1081.6C1315.2 1098.7 1316.3 1109.9 1318 1124C1311.4 1134.9 1304.9 1145.8 1298.3 1156.7C1302.2 1170 1306.4 1187.2 1310 1196.7C1313.6 1206.2 1316.7 1208.2 1320 1214C1316.7 1216.7 1313.3 1219.3 1310 1222C1295 1218 1280 1214 1265 1210C1243.3 1236.3 1221.7 1262.7 1200 1289C1155.3 1289 1110.7 1289 1066 1289Z" fill="url(#gh4)"/>
<path d="M1070 1209C1086.7 1205.4 1108.3 1203.8 1120 1198.3C1131.7 1192.8 1133.3 1183.4 1140 1176C1158.7 1184 1180.5 1199 1196 1200C1211.5 1201 1220.7 1188 1233 1182C1243.7 1192.4 1252.2 1204.8 1265 1213.3C1277.8 1221.8 1297 1224.7 1310 1233.3C1323 1241.9 1334 1255.7 1343.3 1265C1352.6 1274.3 1358.4 1281 1366 1289C1267.3 1289 1168.7 1289 1070 1289C1070 1262.3 1070 1235.7 1070 1209Z" fill="#86868b"/>
<path d="M1170 1132L1146.7 1175L1196.7 1246.7L1226.7 1183.3L1227.5 1132Z" fill="url(#gn4)"/>
<path d="M1140 1175.8L1113.3 1221.7L1163.3 1250L1170 1270L1228.3 1283.3L1210 1256.7L1196.7 1246.7L1146.7 1175Z" fill="#a7a7ad" stroke="#a7a7ad" stroke-width="3" stroke-linejoin="round"/>
<path d="M1233.3 1182.5L1265 1213.3L1236.7 1240L1241.7 1256.7L1218.3 1266.7L1204 1252L1196.7 1246.7L1226.7 1206.7Z" fill="#a1a1a7" stroke="#a1a1a7" stroke-width="3" stroke-linejoin="round"/>
<path d="M1161.7 1005C1168.1 1001 1171 996.2 1180.9 993C1190.8 989.8 1207.8 986.9 1221.2 985.9C1234.6 984.9 1250 985.9 1261.4 986.9C1272.8 987.9 1280.2 990.3 1289.6 992C1289.6 1015.1 1290.3 1044.8 1289.6 1061.4C1288.9 1078 1288.6 1082.3 1285.6 1091.7C1282.6 1101.1 1278.9 1110.9 1271.5 1117.9C1264.1 1125 1248.5 1130.5 1241.3 1134C1234.1 1137.5 1235.2 1138 1228.3 1139.2C1221.4 1140.4 1210 1141.3 1200 1141C1190 1140.7 1178.9 1138.7 1168.3 1137.5C1169.8 1133.6 1171.7 1131.9 1172.8 1125.9C1173.9 1119.9 1176.1 1109.8 1174.8 1101.7C1173.5 1093.7 1168.5 1085.6 1164.7 1077.6C1160.9 1069.5 1153.7 1061.1 1151.7 1053.4C1149.7 1045.7 1151 1039.3 1152.7 1031.2C1154.4 1023.1 1158.7 1013.7 1161.7 1005Z" fill="#f1dcae"/>
<ellipse cx="1199" cy="1030.2" rx="7" ry="11" fill="#5c3d12"/><path d="M1195.2 1020.7Q1190.5 1017.9 1185.5 1023.4" stroke="#5c3d12" stroke-width="2.4" fill="none" stroke-linecap="round"/>
<ellipse cx="1268.5" cy="1027.2" rx="6.5" ry="11" fill="#5c3d12"/><path d="M1272.1 1017.7Q1276.5 1014.9 1281.5 1020.4" stroke="#5c3d12" stroke-width="2.4" fill="none" stroke-linecap="round"/>
<path d="M1235.6 1026L1243.8 1070.5L1232.7 1070.5Z" fill="#54370f" stroke="#54370f" stroke-width="3.4" stroke-linejoin="round"/>
<path d="M1209.1 1084.6C1215.4 1107.7 1255.1 1107.7 1261.4 1082.6" stroke="#54370f" stroke-width="4.2" fill="none" stroke-linecap="round"/>
<path d="M452.5 1289C452.5 1193 452.5 1097 452.5 1001C457.5 978 457.8 949.2 467.5 932C477.2 914.8 495.6 904.9 510.6 898C525.6 891.1 541.9 890.9 557.5 890.6C573.1 890.3 588.8 889.1 604.4 896C620 902.9 640.4 914.5 651.3 932C662.2 949.5 665.6 980.1 670 1001C674.4 1021.9 675.9 1034.3 677.5 1057.5C679.1 1080.7 679.8 1113.8 679.4 1140C679 1166.2 676.7 1190 675.4 1215C675.4 1239.7 675.4 1264.3 675.4 1289C601.1 1289 526.8 1289 452.5 1289Z" fill="#5b4631"/>
<g stroke="#66503a" stroke-width="1.4" opacity=".6" fill="none"><path d="M470 1040V1210M492 1120V1205M655 1040V1210M640 1110V1205M664 1100V1212"/></g>
<path d="M376.5 1289C385.2 1274.9 391.2 1258.6 402.5 1246.7C413.8 1234.8 430.3 1224.8 444.2 1217.5C458.1 1210.2 473.7 1206.7 485.8 1203C497.9 1199.3 504 1196.3 517 1195.6C530 1194.9 548.7 1198.8 564 1199C579.3 1199.2 594 1195 608.8 1196.7C623.5 1198.4 637.6 1204.5 652.5 1209C667.4 1213.5 686.2 1219.3 698.3 1223.8C710.4 1228.3 716.1 1231.9 725 1236C725 1253.7 725 1271.3 725 1289C608.8 1289 492.7 1289 376.5 1289Z" fill="#a67c1e"/>
<path d="M532.7 1138L531.7 1180L522.3 1196.7L564 1236.3L604.6 1195.6L592 1167.5L591 1138Z" fill="url(#gn1)"/>
<path d="M521 1195.6C515.5 1200.1 509.1 1204 504.6 1209C500.1 1214 494.9 1220.2 494.2 1225.8C493.5 1231.4 496.6 1238.7 500.4 1242.5C504.2 1246.3 512.5 1248.5 517 1248.8C521.5 1249.1 524 1246 527.5 1244.6C527.8 1249.4 526.4 1254.5 528.5 1259C530.6 1263.5 535.3 1270.6 540 1271.7C544.7 1272.8 552 1269.9 556.7 1265.4C561.4 1260.9 566.8 1249.4 568 1244.6C569.2 1239.8 565.3 1239.1 564 1236.3C549.7 1222.7 535.3 1209.2 521 1195.6Z" fill="#efb73b"/>
<path d="M564 1236.3C565.7 1239.1 566.4 1240.8 569 1244.6C571.6 1248.4 574.4 1255.7 579.6 1259C584.8 1262.3 595 1265.4 600.4 1264.4C605.8 1263.4 610.5 1257.4 611.9 1253C613.3 1248.6 609.8 1243 608.8 1238C615.7 1238.1 625.1 1240.7 629.6 1238.3C634.1 1235.9 636.1 1229 635.8 1223.8C635.4 1218.6 632.5 1211.9 627.5 1207C622.5 1202.1 612.9 1198.7 605.6 1194.6C591.7 1208.5 577.9 1222.4 564 1236.3Z" fill="#efb73b"/>
<path d="M540.6 955.3C546.2 964.4 550 973.6 557.5 982.5C565 991.4 576.2 1002.2 585.6 1008.8C595 1015.4 605.3 1018.8 613.8 1021.9C622.2 1025 628.8 1025.6 636.3 1027.5C636 1037.5 636.1 1046 635.3 1057.5C634.5 1069 634.8 1085.3 631.7 1096.7C628.7 1108.1 624 1118.2 617 1125.8C610 1133.4 604.9 1139.7 590 1142.5C575.1 1145.3 542.8 1145.3 527.5 1142.5C512.2 1139.7 505.2 1132.8 498.3 1125.8C491.4 1118.8 488.8 1112.2 485.8 1100.8C482.9 1089.4 481.5 1069.4 480.6 1057.5C479.7 1045.6 480.6 1038.8 480.6 1029.4C488.7 1023.8 497.2 1020.3 505 1012.5C512.8 1004.7 521.6 992 527.5 982.5C533.4 973 536.2 964.4 540.6 955.3Z" fill="#a66b2b"/>
<path d="M472.2 1012.5C471.9 1002.5 468.3 994.7 471.3 982.5C474.3 970.3 481.9 951 490 939.4C498.1 927.8 508.8 918.8 520 913C531.2 907.2 545 905.2 557.5 904.7C570 904.2 583.1 904.8 595 910.3C606.9 915.8 620.7 926.7 628.8 937.5C636.9 948.3 640.7 962.5 643.8 975C646.9 987.5 646.3 1000 647.5 1012.5C645 1012.5 642.5 1012.5 640 1012.5C637.5 1002.5 636.9 993.1 632.5 982.5C628.1 971.9 621.6 957.9 613.8 948.8C606 939.7 595 932.1 585.6 928C576.2 923.9 567.8 924.1 557.5 924.4C547.2 924.7 533.8 925.3 523.8 930C513.8 934.7 504.4 943.8 497.5 952.5C490.6 961.2 486.1 972.5 482.5 982.5C478.9 992.5 478.2 1002.5 476 1012.5C474.7 1012.5 473.5 1012.5 472.2 1012.5Z" fill="#e9aa28"/><path d="M472.2 1012.5C471.9 1002.5 468.3 994.7 471.3 982.5C474.3 970.3 481.9 951 490 939.4C498.1 927.8 508.8 918.8 520 913C531.2 907.2 545 905.2 557.5 904.7C570 904.2 583.1 904.8 595 910.3C606.9 915.8 620.7 926.7 628.8 937.5C636.9 948.3 640.7 962.5 643.8 975C646.9 987.5 646.3 1000 647.5 1012.5C645 1012.5 642.5 1012.5 640 1012.5C637.5 1002.5 636.9 993.1 632.5 982.5C628.1 971.9 621.6 957.9 613.8 948.8C606 939.7 595 932.1 585.6 928C576.2 923.9 567.8 924.1 557.5 924.4C547.2 924.7 533.8 925.3 523.8 930C513.8 934.7 504.4 943.8 497.5 952.5C490.6 961.2 486.1 972.5 482.5 982.5C478.9 992.5 478.2 1002.5 476 1012.5C474.7 1012.5 473.5 1012.5 472.2 1012.5Z" fill="url(#pband)" opacity=".5"/>
<ellipse cx="515.3" cy="1047.2" rx="8.3" ry="10.8" fill="#4f3a25"/><path d="M510.7 1037.9Q505.5 1035.1 500.5 1040.5" stroke="#4f3a25" stroke-width="2.4" fill="none" stroke-linecap="round"/>
<ellipse cx="577.2" cy="1046.3" rx="8" ry="10.3" fill="#4f3a25"/><path d="M581.6 1037.4Q586.7 1034.8 591.7 1039.9" stroke="#4f3a25" stroke-width="2.4" fill="none" stroke-linecap="round"/>
<path d="M546.4 1054L551 1083L543 1083Z" fill="#4f3a25" stroke="#4f3a25" stroke-width="3" stroke-linejoin="round"/>
<path d="M525.6 1096C530.7 1117.5 562.7 1117.5 567.8 1094" stroke="#4a3520" stroke-width="4" fill="none" stroke-linecap="round"/>
<path d="M692.5 1054.8C684.2 1052 678.5 1045 673 1035.3C667.5 1025.6 660.7 1009.4 659.4 996.4C658.1 983.4 660.4 970.1 665.3 957.5C670.2 944.9 679.2 930.3 688.6 920.6C698 910.9 710.4 903.9 721.7 899.2C733.1 894.5 744.4 892.4 756.7 892.4C769 892.4 784.9 895.5 795.6 899.2C806.3 902.9 814.4 908.6 820.9 914.7C827.4 920.8 830 928.9 834.5 936C841 938.6 849.1 941.1 853.9 943.9C858.6 946.7 862 942.6 863 953C864 963.4 861.8 989.2 860 1006C858.2 1022.8 854.7 1038 852 1054C828 1056 801.5 1060.3 780 1060C758.5 1059.7 741.8 1054.7 722.7 1052C712.6 1052.9 700.8 1057.6 692.5 1054.8Z" fill="#b8923c"/>
<g stroke="#c7a653" stroke-width="2.2" opacity=".45" fill="none" stroke-linecap="round"><path d="M700 950q30-30 70-32M690 990q20-50 80-60M720 930q40-22 80-8M760 960q30-14 60 0M700 1020q8-40 40-60"/></g>
<path d="M637.9 1289C645.5 1276.9 650.7 1263.9 660.8 1252.8C670.9 1241.7 687.9 1230.8 698.3 1222.2C708.7 1213.6 717 1205.8 723.3 1201.4C729.5 1197 731.6 1197.7 735.8 1195.8C748.3 1200.5 758.3 1210 773.3 1210C788.3 1210 808.4 1200.5 826 1195.8C832.5 1193.5 839.6 1188.7 845.6 1188.9C851.6 1189.1 856.5 1193.7 862.2 1197.2C867.9 1200.7 874.1 1205.7 880 1210C880 1236.3 880 1262.7 880 1289C799.3 1289 718.6 1289 637.9 1289Z" fill="#17315d"/>
<path d="M743.5 1146L742.8 1172.2L735.8 1195.8L751.1 1209.7L773.3 1219.4L806.7 1209.7L826.1 1195.8L823.3 1172.2L821.3 1146Z" fill="#ecd9a8"/>
<path d="M765 1224h54v65h-54z" fill="#1a6f93"/><path d="M769.5 1226v63M814.5 1226v63" stroke="#1f86a8" stroke-width="5"/>
<path d="M729 1199L751 1213.5L773.3 1224.5" stroke="#1c7d9f" stroke-width="9" fill="none" stroke-linejoin="round"/>
<path d="M840 1191L812 1211.5L776 1225" stroke="#1c7d9f" stroke-width="9" fill="none" stroke-linejoin="round"/>
<circle cx="794.2" cy="1247.9" r="7.6" fill="#151f4c"/><circle cx="795.6" cy="1285.5" r="7.6" fill="#151f4c"/>
<path d="M692.5 1054.8C702.6 1053.5 712.6 1052.2 722.7 1050.9C723.7 1041.2 723.2 1031.1 725.6 1021.7C728 1012.3 730.4 1002.3 737.2 994.5C744 986.7 756.7 978.8 766.4 975C776.1 971.2 785.9 970.4 795.6 972C805.3 973.6 817.3 977.4 824.8 984.7C832.2 992 837.4 1005.2 840.3 1015.9C843.2 1026.6 841.6 1038 842.3 1049C843.6 1049.6 844.9 1050.3 846.2 1050.9C849.4 1065.2 855.3 1081.7 855.9 1093.7C856.5 1105.7 853.6 1114.7 850 1122.8C846.4 1130.9 842 1137.3 834.5 1142.3C827 1147.2 817.4 1150.7 805 1152.5C792.6 1154.3 772.9 1154.3 760 1153C747.1 1151.7 736.8 1148.5 727.5 1144.5C718.2 1140.5 709.7 1137.2 704.2 1128.7C698.7 1120.2 696.5 1106 694.5 1093.7C692.5 1081.4 693.2 1067.8 692.5 1054.8Z" fill="#fdedca"/>
<ellipse cx="747" cy="1048.9" rx="8.2" ry="12" fill="#7d6010"/><path d="M742.5 1038.6Q737.3 1035.5 732.3 1041.5" stroke="#7d6010" stroke-width="2.4" fill="none" stroke-linecap="round"/>
<ellipse cx="809.2" cy="1048.9" rx="7.8" ry="12" fill="#7d6010"/><path d="M813.5 1038.6Q818.5 1035.5 823.5 1041.5" stroke="#7d6010" stroke-width="2.4" fill="none" stroke-linecap="round"/>
<path d="M778.4 1051.5L780 1079L774 1079Z" fill="#7d6010" stroke="#7d6010" stroke-width="2.6" stroke-linejoin="round"/>
<path d="M751.8 1106.3C757.5 1125.8 793.8 1125.8 799.5 1106.3" stroke="#7d6010" stroke-width="3.6" fill="none" stroke-linecap="round"/>
<path d="M826.7 1289C832.2 1278.2 837.5 1268.8 843.3 1256.7C849.1 1244.7 856.7 1227.8 861.7 1216.7C866.7 1205.6 870.8 1199.5 873.3 1190C875.8 1180.5 877.5 1171.1 876.7 1160C875.9 1148.9 871.4 1135 868.3 1123.3C865.2 1111.6 861 1100.3 858.3 1090C855.6 1079.7 852.9 1076.2 852.2 1061.4C851.5 1046.6 852.5 1019.5 854.2 1001C855.9 982.5 857.8 965.7 862.2 950.6C866.6 935.5 871.7 921.8 880.4 910.4C889.1 899 902.2 888.6 914.6 882.2C927 875.8 940.5 872.1 954.9 872.1C969.3 872.1 986.8 875.8 1001.2 882.2C1015.6 888.6 1029.8 899 1041.5 910.4C1053.2 921.8 1064.7 935.5 1071.7 950.6C1078.8 965.7 1081.1 982.5 1083.8 1001C1086.5 1019.5 1088 1046.6 1087.9 1061.4C1087.8 1076.2 1084.6 1076.9 1083.3 1090C1082 1103.1 1080.4 1123.3 1080 1140C1079.6 1156.7 1079.7 1176.1 1080.8 1190C1081.9 1203.9 1083.2 1212.2 1086.7 1223.3C1090.2 1234.4 1097 1245.8 1101.7 1256.7C1106.4 1267.7 1110.6 1278.2 1115 1289C1018.9 1289 922.8 1289 826.7 1289Z" fill="#a5801c"/><path d="M826.7 1289C832.2 1278.2 837.5 1268.8 843.3 1256.7C849.1 1244.7 856.7 1227.8 861.7 1216.7C866.7 1205.6 870.8 1199.5 873.3 1190C875.8 1180.5 877.5 1171.1 876.7 1160C875.9 1148.9 871.4 1135 868.3 1123.3C865.2 1111.6 861 1100.3 858.3 1090C855.6 1079.7 852.9 1076.2 852.2 1061.4C851.5 1046.6 852.5 1019.5 854.2 1001C855.9 982.5 857.8 965.7 862.2 950.6C866.6 935.5 871.7 921.8 880.4 910.4C889.1 899 902.2 888.6 914.6 882.2C927 875.8 940.5 872.1 954.9 872.1C969.3 872.1 986.8 875.8 1001.2 882.2C1015.6 888.6 1029.8 899 1041.5 910.4C1053.2 921.8 1064.7 935.5 1071.7 950.6C1078.8 965.7 1081.1 982.5 1083.8 1001C1086.5 1019.5 1088 1046.6 1087.9 1061.4C1087.8 1076.2 1084.6 1076.9 1083.3 1090C1082 1103.1 1080.4 1123.3 1080 1140C1079.6 1156.7 1079.7 1176.1 1080.8 1190C1081.9 1203.9 1083.2 1212.2 1086.7 1223.3C1090.2 1234.4 1097 1245.8 1101.7 1256.7C1106.4 1267.7 1110.6 1278.2 1115 1289C1018.9 1289 922.8 1289 826.7 1289Z" fill="url(#pdot)" opacity=".75"/>
<path d="M914.6 882.2C903.2 891.6 889.1 899 880.4 910.4C871.7 921.8 866.6 935.5 862.2 950.6C857.8 965.7 855.9 982.5 854.2 1001C852.5 1019.5 851.5 1046.6 852.2 1061.4C852.9 1076.2 855.6 1079.7 858.3 1090C861 1100.3 865 1112.2 868.3 1123.3C870.2 1119.5 874.7 1119 874 1112C873.3 1105 866.3 1093.4 864 1081.6C861.7 1069.8 860 1058.1 860 1041.3C860 1024.5 861.3 996.4 864 980.9C866.7 965.4 871.7 958.8 876 948C880.3 937.2 883 925.8 890 916C897 906.2 908.7 898 918 889C916.9 886.7 915.7 884.5 914.6 882.2Z" fill="#86691a"/>
<path d="M868.3 1123.3C869.7 1116 875.3 1114.3 885 1116C894.7 1117.7 916.2 1130.1 926.7 1133.3C937.2 1136.5 941.1 1134.4 948.3 1135C935.5 1142.2 921.1 1149.2 910 1156.7C898.9 1164.2 887.8 1174.5 881.7 1180C875.6 1185.5 876.1 1186.7 873.3 1190C874.4 1180 877.5 1171.1 876.7 1160C875.9 1148.9 866.9 1130.6 868.3 1123.3Z" fill="#896916"/>
<path d="M872.3 944.6C871.7 933 879 920.1 886.4 910.4C893.8 900.7 905.9 891.2 916.6 886.2C927.4 881.2 940.1 877.8 950.9 880.1C961.6 882.5 972 890.2 981.1 900.3C990.2 910.4 999.2 927.2 1005.3 940.6C1011.3 954 1015.7 967.5 1017.4 980.9C1019.1 994.3 1017 1011.9 1015.3 1021.2C1013.6 1030.5 1016.5 1040.5 1007.3 1037C998.1 1033.5 979.5 1009.5 960 1000C940.5 990.5 904.6 989.2 890 980C875.4 970.8 872.9 956.2 872.3 944.6Z" fill="#ecb71c"/><path d="M872.3 944.6C871.7 933 879 920.1 886.4 910.4C893.8 900.7 905.9 891.2 916.6 886.2C927.4 881.2 940.1 877.8 950.9 880.1C961.6 882.5 972 890.2 981.1 900.3C990.2 910.4 999.2 927.2 1005.3 940.6C1011.3 954 1015.7 967.5 1017.4 980.9C1019.1 994.3 1017 1011.9 1015.3 1021.2C1013.6 1030.5 1016.5 1040.5 1007.3 1037C998.1 1033.5 979.5 1009.5 960 1000C940.5 990.5 904.6 989.2 890 980C875.4 970.8 872.9 956.2 872.3 944.6Z" fill="url(#pdot2)" opacity=".6"/>
<path d="M910.6 923.5C925.4 930.5 941.5 935 954.9 944.6C968.3 954.2 982.5 966.5 991.2 980.9C999.9 995.3 1005.3 1017.8 1007.3 1031.2C1009.3 1044.6 1006.6 1049 1003.2 1061.4C999.8 1073.8 995.8 1093.7 987.1 1105.8C978.4 1117.9 963.6 1129.6 950.9 1134C938.1 1138.4 923 1135.4 910.6 1132C898.2 1128.6 884.4 1122.2 876.3 1113.8C868.2 1105.4 865.2 1093.7 862.2 1081.6C859.2 1069.5 858.2 1058.1 858.2 1041.3C858.2 1024.5 859.2 996.7 862.2 980.9C865.2 965.1 868.2 956.2 876.3 946.6C884.4 937 899.2 931.2 910.6 923.5Z" fill="#412911"/>
<ellipse cx="875.3" cy="1027.2" rx="7.2" ry="10.5" fill="#c79a4c"/><path d="M871.3 1018.2Q866.6 1015.4 861.6 1020.7" stroke="#c79a4c" stroke-width="2.4" fill="none" stroke-linecap="round"/>
<ellipse cx="944.8" cy="1027.2" rx="7" ry="10.5" fill="#c79a4c"/><path d="M948.6 1018.2Q953.3 1015.4 958.3 1020.7" stroke="#c79a4c" stroke-width="2.4" fill="none" stroke-linecap="round"/>
<path d="M907.5 999Q909.8 996 912 999L910.5 1054.5L900.5 1054.5Z" fill="#c79a4c" stroke="#c79a4c" stroke-width="2.4" stroke-linejoin="round"/>
<path d="M882.4 1076.6C888 1095.2 923.1 1095.2 928.7 1077.6" stroke="#c79a4c" stroke-width="3.4" fill="none" stroke-linecap="round"/>
</g>
<g clip-path="url(#cart)">
<g font-family="'DejaVu Sans','Liberation Sans',sans-serif" stroke-linejoin="round" stroke-linecap="round">
<g transform="scale(0.9 1)"><text x="933.3 1053.9 1157.2 1250.9 1331.7 1402.2 1475" y="672.5" font-size="111" text-anchor="middle" fill="#f1b327" stroke="#f1b327" stroke-width="12.5" vector-effect="non-scaling-stroke"><tspan textLength="118" lengthAdjust="spacingAndGlyphs">W</tspan><tspan textLength="66" lengthAdjust="spacingAndGlyphs">O</tspan><tspan textLength="116" lengthAdjust="spacingAndGlyphs">M</tspan>EN’S</text></g>
<g transform="scale(0.78 1)"><text x="890.6 974.4 1042.9 1116.7 1198.7 1273.7 1340.4" y="787.5" font-size="103" text-anchor="middle" fill="#f9e4a2" stroke="#f9e4a2" stroke-width="11" vector-effect="non-scaling-stroke">H<tspan font-family="'DejaVu Sans Mono',monospace">I</tspan>STORY</text></g>
<g transform="scale(0.86 1)"><text x="1345.9 1439 1522.1 1609.8 1696.2" y="790" font-size="98" text-anchor="middle" fill="#f9e4a2" stroke="#f9e4a2" stroke-width="11" vector-effect="non-scaling-stroke">MONTH</text></g>
</g>
</g>
</svg>
<!-- ART-END -->

<!-- ===== popover ===== -->
<div id="shade"></div>
<svg class="abs" style="left:1730px;top:116px;z-index:41" width="70" height="30" viewBox="1730 116 70 30"><path d="M1736 143.500C1747 143.500 1751.500 138 1756.500 131L1761.200 124.200Q1765 119.200 1768.800 124.200L1773.500 131C1778.500 138 1783 143.500 1794 143.500Z" fill="#f5f6f7"/></svg>
<div id="pop">
  <svg class="abs" style="left:12px;top:24px" width="30" height="42" viewBox="1248 166 30 42"><path d="M1270.300 172.600L1254.600 186.600L1270.300 200.600" fill="none" stroke="#e6951c" stroke-width="4" stroke-linecap="round" stroke-linejoin="round"/></svg>
  <div class="abs" style="left:51px;top:27px;font-size:30px;line-height:36px;color:#e6951c;letter-spacing:.7px">More</div>
  <div class="abs" id="exp" style="left:0;width:667px;text-align:center;top:27px;font-size:30px;line-height:36px;color:#161616;-webkit-text-stroke:1.1px #161616;letter-spacing:.8px">Export</div>
  <div class="list">
    <div class="row" style="top:0">PDF</div>
    <div class="sep" style="top:77px"></div>
    <div class="row" style="top:79px">Word</div>
    <div class="sep" style="top:156px"></div>
    <div class="row" style="top:158px">EPUB</div>
    <div class="sep" style="top:235px"></div>
    <div class="row" style="top:237px">RTF</div>
    <div class="sep" style="top:314px"></div>
    <div class="row" style="top:316px">Pages Template</div>
  </div>
</div>

</div>
</body>
</html>
